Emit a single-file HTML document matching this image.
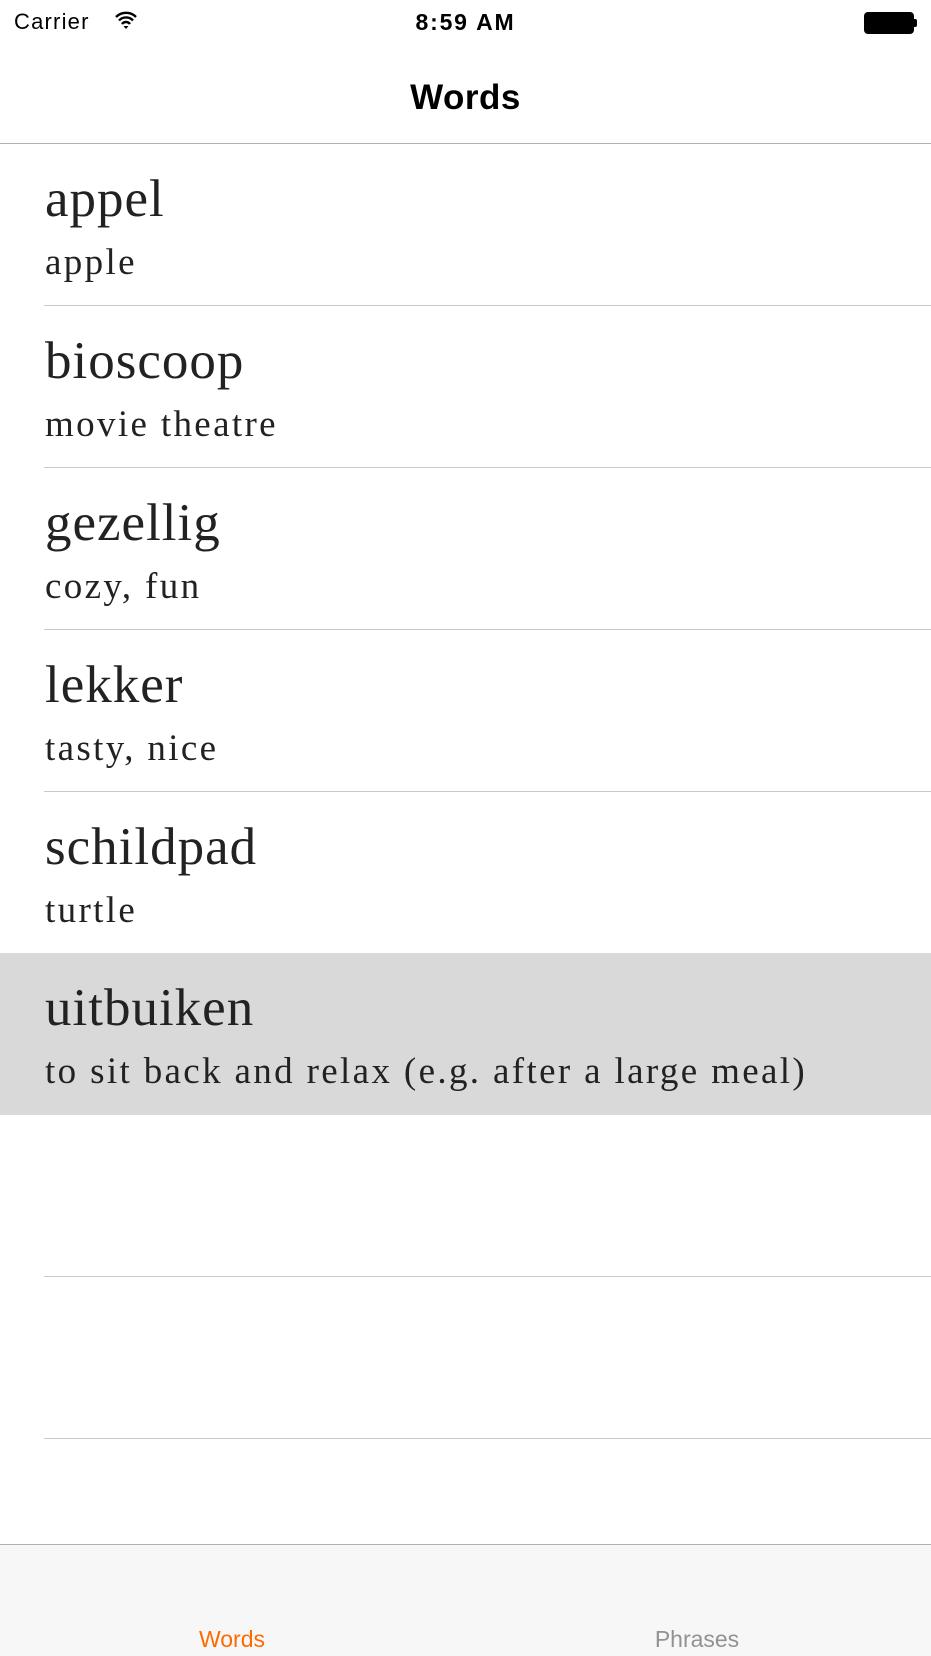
<!DOCTYPE html>
<html><head><meta charset="utf-8"><style>
*{margin:0;padding:0;box-sizing:border-box}
body{width:931px;height:1656px;background:#fff;position:relative;overflow:hidden;font-family:"Liberation Sans",sans-serif}
.abs{position:absolute}
.sb{font-size:22px;color:#000;top:9px;letter-spacing:1.2px}
.row{position:absolute;left:0;width:931px;height:162px}
.sep{position:absolute;left:44px;right:0;height:1px;background:#c8c7cc}
.w{position:absolute;left:45px;font-family:"Liberation Serif",serif;color:#222;font-size:53px;line-height:1;top:29px;letter-spacing:1px}
.t{position:absolute;left:45px;font-family:"Liberation Serif",serif;color:#222;font-size:37px;line-height:1;top:100px;letter-spacing:2.35px}
</style></head><body>
<div class="abs sb" style="left:14px">Carrier</div>
<svg class="abs" style="left:114px;top:10px" width="24" height="20" viewBox="0 0 24 20"><path d="M2 7a14 14 0 0 1 20 0M5 10.5a9.5 9.5 0 0 1 14 0M8 14a5 5 0 0 1 8 0" stroke="#000" stroke-width="2.4" fill="none"/><path d="M9.5 16l2.5 3 2.5-3z" fill="#000"/></svg>
<div class="abs sb" style="left:0;width:931px;text-align:center;font-weight:bold;font-size:23px;letter-spacing:1.8px">8:59 AM</div>
<div class="abs" style="left:864px;top:12px;width:50px;height:22px;border:1.5px solid #000;border-radius:4px;background:#000"></div>
<div class="abs" style="left:914px;top:19px;width:3px;height:8px;background:#000;border-radius:0 2px 2px 0"></div>
<div class="abs" style="left:0;width:931px;top:78px;text-align:center;font-weight:bold;font-size:35px;letter-spacing:0.5px">Words</div>
<div class="abs" style="left:0;top:143px;width:931px;height:1px;background:#b2b2b2"></div>

<div class="row" style="top:144px"><div class="w">appel</div><div class="t">apple</div></div>
<div class="sep" style="top:305px"></div>
<div class="row" style="top:306px"><div class="w">bioscoop</div><div class="t">movie theatre</div></div>
<div class="sep" style="top:467px"></div>
<div class="row" style="top:468px"><div class="w">gezellig</div><div class="t">cozy, fun</div></div>
<div class="sep" style="top:629px"></div>
<div class="row" style="top:630px"><div class="w">lekker</div><div class="t">tasty, nice</div></div>
<div class="sep" style="top:791px"></div>
<div class="row" style="top:792px"><div class="w">schildpad</div><div class="t">turtle</div></div>
<div class="row" style="top:953px;background:#d9d9d9"><div class="w">uitbuiken</div><div class="t">to sit back and relax (e.g. after a large meal)</div></div>
<div class="sep" style="top:1276px"></div>
<div class="sep" style="top:1438px"></div>

<div class="abs" style="left:0;top:1544px;width:931px;height:112px;background:#f7f7f7;border-top:1.5px solid #b2b2b2"></div>
<div class="abs" style="left:132px;width:200px;text-align:center;top:1626px;font-size:23px;color:#ff6a00">Words</div>
<div class="abs" style="left:597px;width:200px;text-align:center;top:1626px;font-size:23px;color:#929292">Phrases</div>
</body></html>
